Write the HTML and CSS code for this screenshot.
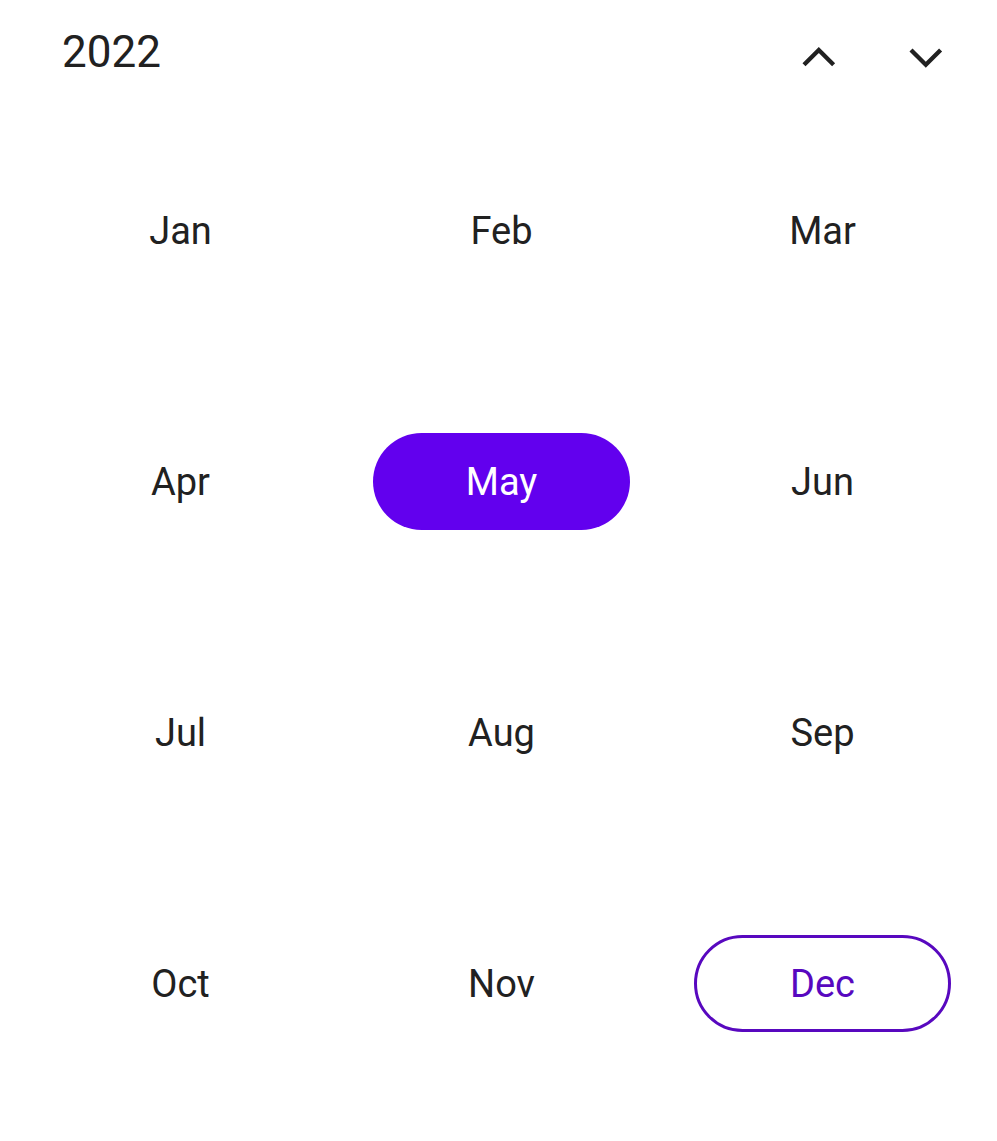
FILE: index.html
```
<!DOCTYPE html>
<html lang="en">
<head>
<meta charset="utf-8">
<title>Month picker</title>
<link rel="stylesheet" href="styles.css">
</head>
<body>
<main class="picker">
  <header class="header">
    <h1 class="year">2022</h1>
    <div class="nav">
      <button class="nav-button" type="button" aria-label="Previous year"><svg class="chevron" viewBox="0 0 34 22" aria-hidden="true"><path d="M2 18.800 16.800 4 31.600 18.800"/></svg></button>
      <button class="nav-button" type="button" aria-label="Next year"><svg class="chevron" viewBox="0 0 34 22" aria-hidden="true"><path d="M2 4 16.800 18.800 31.600 4"/></svg></button>
    </div>
  </header>
  <div class="months">
    <button class="month" type="button">Jan</button>
    <button class="month" type="button">Feb</button>
    <button class="month" type="button">Mar</button>
    <button class="month" type="button">Apr</button>
    <button class="month selected" type="button" aria-pressed="true">May</button>
    <button class="month" type="button">Jun</button>
    <button class="month" type="button">Jul</button>
    <button class="month" type="button">Aug</button>
    <button class="month" type="button">Sep</button>
    <button class="month" type="button">Oct</button>
    <button class="month" type="button">Nov</button>
    <button class="month current" type="button" aria-current="date">Dec</button>
  </div>
</main>
</body>
</html>
```
FILE: styles.css
```
* {
  box-sizing: border-box;
}

body {
  margin: 0;
  background: #fff;
  color: #212121;
  font-family: Roboto, "Liberation Sans", sans-serif;
}

button {
  padding: 0;
  border: 0;
  background: none;
  color: inherit;
  font: inherit;
  cursor: pointer;
}

.header {
  display: flex;
  align-items: center;
  justify-content: space-between;
  padding: 11px 18px 0 62px;
}

.year {
  margin: 0;
  font-size: 44px;
  font-weight: 400;
  line-height: 72px;
}

.nav {
  display: flex;
  padding-top: 10px;
}

.nav-button {
  display: flex;
  align-items: center;
  justify-content: center;
  width: 107px;
  height: 72px;
}

.chevron {
  width: 34px;
  height: 22px;
  fill: none;
  stroke: currentColor;
  stroke-width: 4.3;
}

.months {
  display: grid;
  grid-template-columns: repeat(3, 1fr);
  gap: 154px 64px;
  padding: 89px 46px 109px 52px;
}

.month {
  height: 97px;
  border-radius: 49px;
  font-size: 38px;
  line-height: 48px;
}

.selected {
  background: #6200ee;
  color: #fff;
}

.current {
  border: 3px solid #5808bf;
  color: #5808bf;
}
```
